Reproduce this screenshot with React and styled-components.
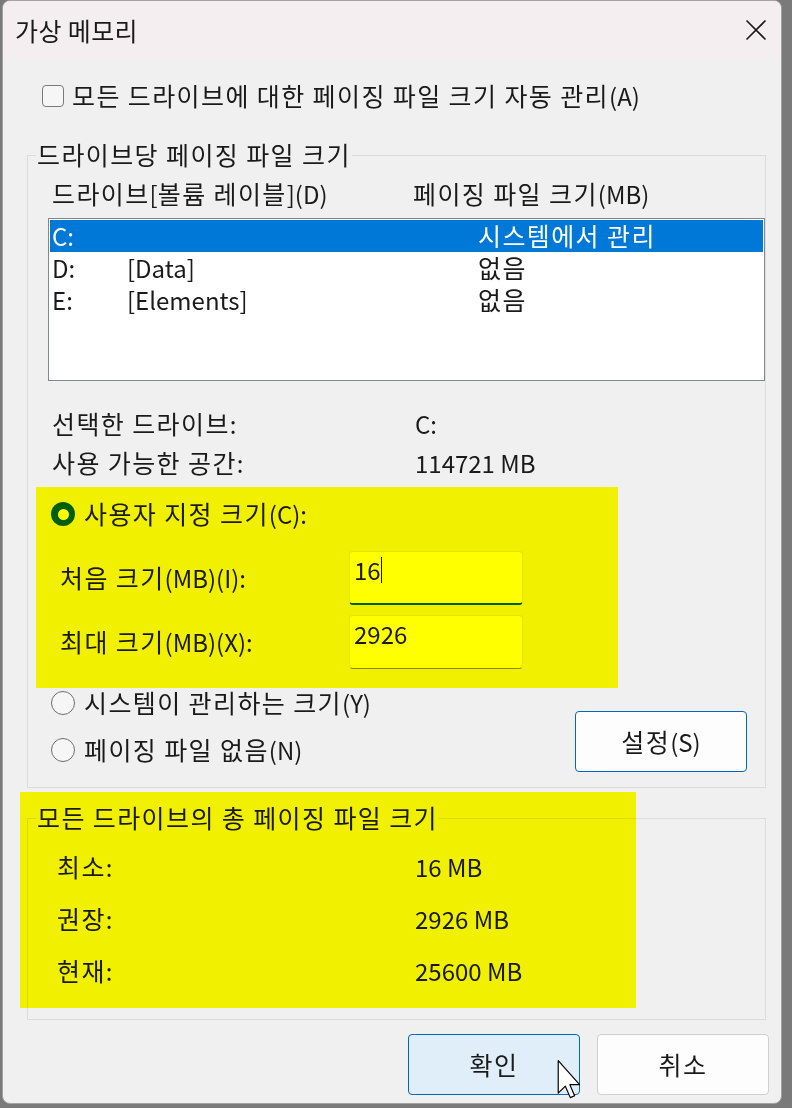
import React from "react";
import styled, { createGlobalStyle } from "styled-components";

const GlobalStyle = createGlobalStyle`
  html, body { margin: 0; padding: 0; background: #7a7a7a; }
  body { font-family: "Noto Sans CJK KR", "Noto Sans", sans-serif; }
  * { box-sizing: border-box; }
`;

const Window = styled.div`
  position: relative;
  margin-left: 2px;
  width: 780px;
  height: 1104px;
  border: 1px solid #a3a3a3;
  border-radius: 8px;
  background: #f0f0f0;
  overflow: hidden;
  font-size: 24px;
  color: #1a1a1a;
  isolation: isolate;
`;

const TitleBar = styled.div`
  height: 57px;
  background: #f4eef1;
  display: flex;
  align-items: center;
  justify-content: space-between;
  padding: 0 14px 0 12px;
`;

const Title = styled.span`
  font-size: 25px;
  line-height: 32px;
  letter-spacing: 0.4px;
`;

const Hangul = styled.span`
  font-size: 25px;
  line-height: 20px;
  letter-spacing: 1.4px;
`;

const HANGUL_RUN = /([\uAC00-\uD7A3]+(?:\s+[\uAC00-\uD7A3]+)*)/;

const K = ({ children }) =>
  String(children)
    .split(HANGUL_RUN)
    .filter((part) => part !== "")
    .map((part, i) =>
      /[\uAC00-\uD7A3]/.test(part) ? <Hangul key={i}>{part}</Hangul> : <React.Fragment key={i}>{part}</React.Fragment>
    );

const Body = styled.div`
  padding: 22px 12px 0 24px;
`;

const CheckRow = styled.label`
  display: flex;
  align-items: center;
  gap: 8px;
  height: 32px;
  margin-left: 15px;
  line-height: 32px;
`;

const CheckBox = styled.span`
  flex: none;
  width: 22px;
  height: 22px;
  border: 1px solid #7a7a7a;
  border-radius: 4px;
  background: #f6f6f6;
`;

const Group = styled.fieldset`
  margin: ${(p) => p.$top}px 3px 0 0;
  padding: 0;
  border: 1px solid #dcdcdc;
  min-width: 0;
`;

const Legend = styled.legend`
  margin-left: 8px;
  padding: 0 1px;
  font-size: 24px;
  line-height: 32px;
  height: 32px;
`;

const GroupInner = styled.div`
  padding: ${(p) => p.$pad};
`;

const HeaderRow = styled.div`
  display: grid;
  grid-template-columns: 361px 1fr;
  height: 32px;
  line-height: 32px;
  padding-left: 4px;
  white-space: nowrap;
`;

const List = styled.div`
  margin-top: 8px;
  height: 163px;
  border: 1px solid #828790;
  background: #ffffff;
  padding: 1px;
`;

const ListRow = styled.div`
  display: grid;
  grid-template-columns: 75px 351px 1fr;
  height: 32px;
  line-height: 32px;
  padding-left: 2px;
  white-space: nowrap;
  background: ${(p) => (p.$selected ? "#0078d7" : "transparent")};
  color: ${(p) => (p.$selected ? "#ffffff" : "#1a1a1a")};
`;

const InfoGrid = styled.div`
  display: grid;
  grid-template-columns: ${(p) => p.$col}px 1fr;
  grid-auto-rows: 32px;
  row-gap: ${(p) => p.$gap}px;
  margin-top: ${(p) => p.$top}px;
  padding-left: ${(p) => p.$left}px;
  line-height: 32px;
  white-space: nowrap;
`;

const RadioRow = styled.label`
  display: flex;
  align-items: center;
  gap: 9px;
  height: 32px;
  line-height: 32px;
  padding-left: 3px;
  margin-top: ${(p) => p.$top || 0}px;
  white-space: nowrap;
`;

const RadioCircle = styled.span`
  flex: none;
  width: 24px;
  height: 24px;
  border-radius: 50%;
  display: flex;
  align-items: center;
  justify-content: center;
  background: ${(p) => (p.$checked ? "#005fb8" : "#f6f6f6")};
  border: ${(p) => (p.$checked ? "none" : "1.5px solid #6e6e6e")};
  &::after {
    content: "";
    display: ${(p) => (p.$checked ? "block" : "none")};
    width: 11px;
    height: 11px;
    border-radius: 50%;
    background: #ffffff;
  }
`;

const FieldRow = styled.div`
  display: grid;
  grid-template-columns: 289px 174px;
  align-items: center;
  padding-left: 12px;
  margin-top: ${(p) => p.$top}px;
  line-height: 32px;
  white-space: nowrap;
`;

const Field = styled.div`
  height: 54px;
  background: #ffffff;
  border: 1px solid #e6e6e6;
  border-bottom: ${(p) => (p.$focused ? "2px solid #005fb8" : "1px solid #8a8a8a")};
  border-radius: 4px;
  padding: 2px 4px 0;
  line-height: 32px;
  display: flex;
  align-items: flex-start;
`;

const Caret = styled.span`
  display: inline-block;
  width: 1.5px;
  height: 26px;
  margin-top: 3px;
  background: #111;
`;

const BottomArea = styled.div`
  display: flex;
  justify-content: space-between;
  align-items: flex-start;
  margin-top: 18px;
  padding-right: 18px;
`;

const RadioColumn = styled.div`
  display: flex;
  flex-direction: column;
  gap: 15px;
`;

const Button = styled.button`
  width: 172px;
  height: 61px;
  margin-top: ${(p) => p.$top || 0}px;
  border-radius: 4px;
  border: 1px solid ${(p) => (p.$accent ? "#0067c0" : "#d0d0d0")};
  background: ${(p) => (p.$primary ? "#e0eef9" : "#fdfdfd")};
  font-family: inherit;
  font-size: 24px;
  line-height: 32px;
  color: #1a1a1a;
  padding: 0;
  display: flex;
  align-items: center;
  justify-content: center;
`;

const ButtonRow = styled.div`
  display: flex;
  justify-content: flex-end;
  gap: 17px;
  margin-top: 14px;
`;

const Highlight = styled.div`
  position: absolute;
  left: ${(p) => p.$x}px;
  top: ${(p) => p.$y}px;
  width: ${(p) => p.$w}px;
  height: ${(p) => p.$h}px;
  background: #ffff00;
  mix-blend-mode: multiply;
  pointer-events: none;
`;

const Cursor = styled.svg`
  position: absolute;
  left: 551px;
  top: 1058px;
  pointer-events: none;
`;

const CloseIcon = () => (
  <svg width="22" height="22" viewBox="0 0 22 22">
    <path d="M1.5 1.5 L20.5 20.5 M20.5 1.5 L1.5 20.5" stroke="#1a1a1a" strokeWidth="1.6" fill="none" />
  </svg>
);

export default function App() {
  return (
    <>
      <GlobalStyle />
      <Window>
        <TitleBar>
          <Title>가상 메모리</Title>
          <CloseIcon />
        </TitleBar>
        <Body>
          <CheckRow>
            <CheckBox />
            <span><K>모든 드라이브에 대한 페이징 파일 크기 자동 관리(A)</K></span>
          </CheckRow>

          <Group $top={27}>
            <Legend><K>드라이브당 페이징 파일 크기</K></Legend>
            <GroupInner $pad="7px 0 15px 20px">
              <HeaderRow>
                <span><K>드라이브[볼륨 레이블](D)</K></span>
                <span><K>페이징 파일 크기(MB)</K></span>
              </HeaderRow>
              <List>
                <ListRow $selected>
                  <span>C:</span>
                  <span></span>
                  <span><K>시스템에서 관리</K></span>
                </ListRow>
                <ListRow>
                  <span>D:</span>
                  <span>[Data]</span>
                  <span><K>없음</K></span>
                </ListRow>
                <ListRow>
                  <span>E:</span>
                  <span>[Elements]</span>
                  <span><K>없음</K></span>
                </ListRow>
              </List>
              <InfoGrid $col={363} $gap={7} $top={27} $left={4}>
                <span><K>선택한 드라이브:</K></span>
                <span>C:</span>
                <span><K>사용 가능한 공간:</K></span>
                <span>114721 MB</span>
              </InfoGrid>

              <RadioRow $top={19}>
                <RadioCircle $checked />
                <span><K>사용자 지정 크기(C):</K></span>
              </RadioRow>
              <FieldRow $top={21}>
                <span><K>처음 크기(MB)(I):</K></span>
                <Field $focused>
                  <span>16</span>
                  <Caret />
                </Field>
              </FieldRow>
              <FieldRow $top={10}>
                <span><K>최대 크기(MB)(X):</K></span>
                <Field>
                  <span>2926</span>
                </Field>
              </FieldRow>

              <BottomArea>
                <RadioColumn>
                  <RadioRow>
                    <RadioCircle />
                    <span><K>시스템이 관리하는 크기(Y)</K></span>
                  </RadioRow>
                  <RadioRow>
                    <RadioCircle />
                    <span><K>페이징 파일 없음(N)</K></span>
                  </RadioRow>
                </RadioColumn>
                <Button $accent $top={24}><span><K>설정(S)</K></span></Button>
              </BottomArea>
            </GroupInner>
          </Group>

          <Group $top={14}>
            <Legend><K>모든 드라이브의 총 페이징 파일 크기</K></Legend>
            <GroupInner $pad="17px 0 32px 29px">
              <InfoGrid $col={358} $gap={20} $top={0} $left={0}>
                <span><K>최소:</K></span>
                <span>16 MB</span>
                <span><K>권장:</K></span>
                <span>2926 MB</span>
                <span><K>현재:</K></span>
                <span>25600 MB</span>
              </InfoGrid>
            </GroupInner>
          </Group>

          <ButtonRow>
            <Button $accent $primary><span><K>확인</K></span></Button>
            <Button><span><K>취소</K></span></Button>
          </ButtonRow>
        </Body>

        <Highlight $x={33} $y={486} $w={582} $h={201} />
        <Highlight $x={17} $y={791} $w={616} $h={216} />

        <Cursor width="27" height="41" viewBox="0 0 12 19">
          <path
            d="M1.7 0.8 L1.7 15.8 L5 12.6 L7.3 17.9 L9.3 17 L7.1 11.9 L11.6 11.9 Z"
            fill="#ffffff"
            stroke="#000000"
            strokeWidth="0.55"
            strokeLinejoin="round"
          />
        </Cursor>
      </Window>
    </>
  );
}
